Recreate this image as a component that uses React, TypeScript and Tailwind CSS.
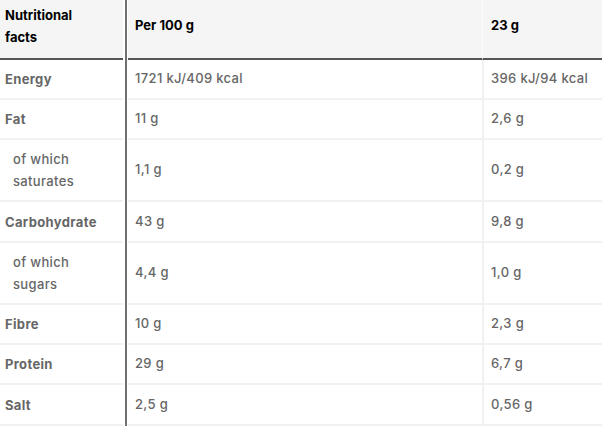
const rows = [
  { label: "Energy", per100: "1721 kJ/409 kcal", portion: "396 kJ/94 kcal", h: "h-[40px]" },
  { label: "Fat", per100: "11 g", portion: "2,6 g", h: "h-[40px]" },
  { label: ["of which", "saturates"], per100: "1,1 g", portion: "0,2 g", sub: true, h: "h-[62px]" },
  { label: "Carbohydrate", per100: "43 g", portion: "9,8 g", h: "h-[41px]" },
  { label: ["of which", "sugars"], per100: "4,4 g", portion: "1,0 g", sub: true, h: "h-[62px]" },
  { label: "Fibre", per100: "10 g", portion: "2,3 g", h: "h-[40px]" },
  { label: "Protein", per100: "29 g", portion: "6,7 g", h: "h-[40px]" },
  { label: "Salt", per100: "2,5 g", portion: "0,56 g", h: "h-[41px]" },
];

function Divider() {
  return (
    <div className="w-[5px] shrink-0 flex justify-center bg-white">
      <div className="w-[2px] bg-[#707070]" />
    </div>
  );
}

export default function App() {
  return (
    <div
      className="w-[602px] h-[438px] bg-white text-[13px]"
      style={{ fontFamily: "Inter, 'Open Sans', sans-serif" }}
    >
      {/* header */}
      <div className="flex h-[60px] font-bold text-black">
        <div className="w-[123px] shrink-0 bg-[#f5f5f5] border-b-2 border-[#555] flex items-center pl-[5px] pb-[6px] leading-[22px]">
          Nutritional
          <br />
          facts
        </div>
        <Divider />
        <div className="flex-1 bg-[#f5f5f5] border-b-2 border-[#555] flex items-center pl-[7px] pb-[6px]">
          Per 100 g
        </div>
        <div className="w-[120px] shrink-0 bg-[#f5f5f5] border-b-2 border-l border-[#555] border-l-[#fbfbfb] flex items-center pl-[8px] pb-[6px]">
          23 g
        </div>
      </div>

      {rows.map((r, i) => (
        <div key={i} className={`flex ${r.h} text-[#666] tracking-[0.35px]`}>
          <div
            className={`w-[123px] shrink-0 border-b-2 border-[#f1f1f1] flex items-center leading-[22px] ${
              r.sub ? "pl-[13px] font-medium" : "pl-[5px] font-bold"
            }`}
          >
            {Array.isArray(r.label) ? (
              <span>
                {r.label[0]}
                <br />
                {r.label[1]}
              </span>
            ) : (
              r.label
            )}
          </div>
          <Divider />
          <div className="flex-1 border-b-2 border-[#f1f1f1] flex items-center pl-[7px] font-medium">
            {r.per100}
          </div>
          <div className="w-[120px] shrink-0 border-b-2 border-l-2 border-[#f1f1f1] flex items-center pl-[7px] font-medium">
            {r.portion}
          </div>
        </div>
      ))}
    </div>
  );
}
